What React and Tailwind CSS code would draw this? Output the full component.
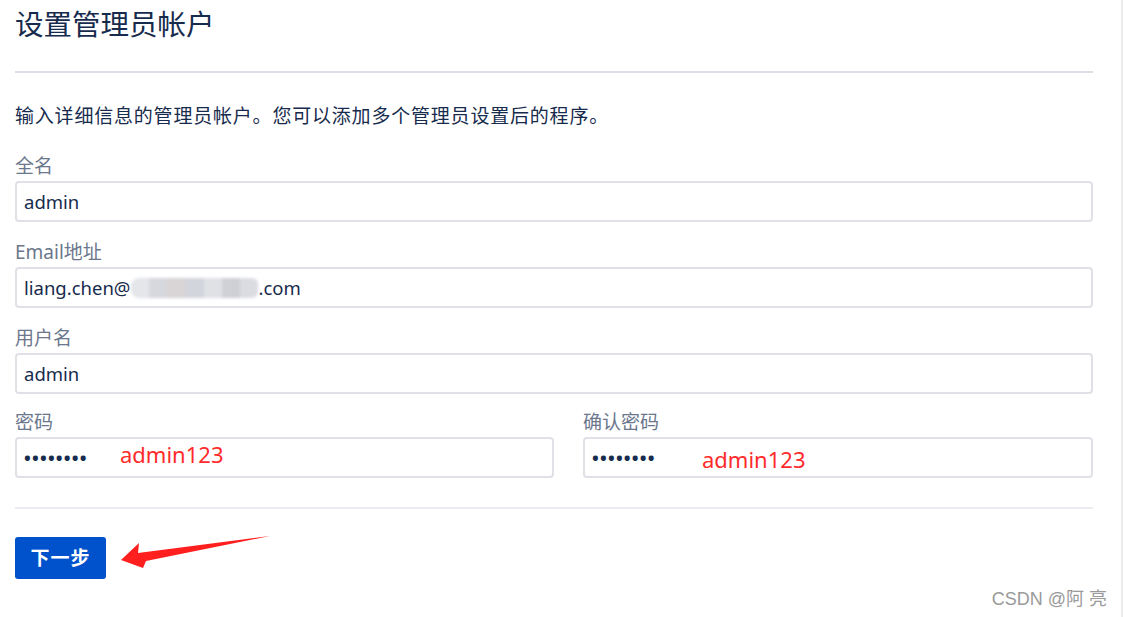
import React from 'react'

const font = { fontFamily: '"Noto Sans", "Noto Sans CJK SC", sans-serif' }

const Field = ({ label, children, className = '' }) => (
  <div className={'mt-[16px] ' + className}>
    <div className='h-[28px] leading-[28px] text-[19px] text-[#6b778c]'>{label}</div>
    <div className='mt-px'>{children}</div>
  </div>
)

const Input = ({ children, className = '' }) => (
  <div className={'relative h-[41px] border-2 border-[#dfe1e6] rounded-[4px] bg-white flex items-center px-[7px] text-[18.5px] leading-[24px] text-[#172b4d] ' + className}>
    {children}
  </div>
)

const Dots = () => (
  <span className='tracking-[1.2px] text-[18px] leading-[20px] font-bold text-[#172b4d]'>••••••••</span>
)

const Blur = () => (
  <span className='inline-flex h-[20px] w-[128px] rounded-[8px] overflow-hidden blur-[1.5px]'>
    <span className='flex-1 bg-[#e4e6ea]' />
    <span className='flex-1 bg-[#d6d8de]' />
    <span className='flex-1 bg-[#d9d4d6]' />
    <span className='flex-1 bg-[#d2d5dc]' />
    <span className='flex-1 bg-[#dfe1e5]' />
    <span className='flex-1 bg-[#cfd0d6]' />
    <span className='flex-1 bg-[#dadce2]' />
  </span>
)

const App = () => {
  return (
    <div style={font} className='relative w-[1123px] h-[617px] bg-white border-r-2 border-[#ececec] overflow-hidden'>
      <div className='w-[1078px] ml-[15px]'>
        <h1 className='mt-[4px] h-[40px] leading-[40px] text-[28.5px] text-[#172b4d]'>设置管理员帐户</h1>
        <div className='mt-[27px] h-[2px] bg-[#dcdfe6]' />
        <p className='mt-[29px] h-[28px] leading-[28px] text-[19px] text-[#172b4d] tracking-[0.8px]'>
          输入详细信息的管理员帐户。您可以添加多个管理员设置后的程序。
        </p>
        <Field label='全名' className='!mt-[22px]'>
          <Input>admin</Input>
        </Field>
        <Field label='Email地址'>
          <Input>
            <span>liang.chen@</span>
            <Blur />
            <span>.com</span>
          </Input>
        </Field>
        <Field label='用户名'>
          <Input>admin</Input>
        </Field>
        <div className='flex gap-[29px]'>
          <Field label='密码' className='w-[539px] !mt-[14px]'>
            <Input>
              <Dots />
              <span className='absolute left-[103px] top-[-3px] text-[22px] leading-[36px] text-[#ff2b2b]'>admin123</span>
            </Input>
          </Field>
          <Field label='确认密码' className='flex-1 !mt-[14px]'>
            <Input>
              <Dots />
              <span className='absolute left-[117px] top-[2px] text-[22px] leading-[36px] text-[#ff2b2b]'>admin123</span>
            </Input>
          </Field>
        </div>
        <div className='mt-[29px] h-[2px] bg-[#ebecf0]' />
        <button className='mt-[28px] w-[91px] h-[42px] rounded-[3px] bg-[#0052cc] text-white text-[19px] font-bold tracking-[1px]'>
          下一步
        </button>
      </div>
      <svg className='absolute left-[110px] top-[528px]' width='170' height='48' viewBox='110 528 170 48'>
        <polygon points='121,560 139,543 138,553 270,536 146,561 143,568' fill='#ff1f1f' />
      </svg>
      <div className='absolute right-[14px] top-[586px] text-[18px] text-[#9a9a9a]' style={{ fontFamily: '"Liberation Sans", "Noto Sans CJK SC", sans-serif' }}>
        CSDN @阿 亮
      </div>
    </div>
  )
}

export default App
